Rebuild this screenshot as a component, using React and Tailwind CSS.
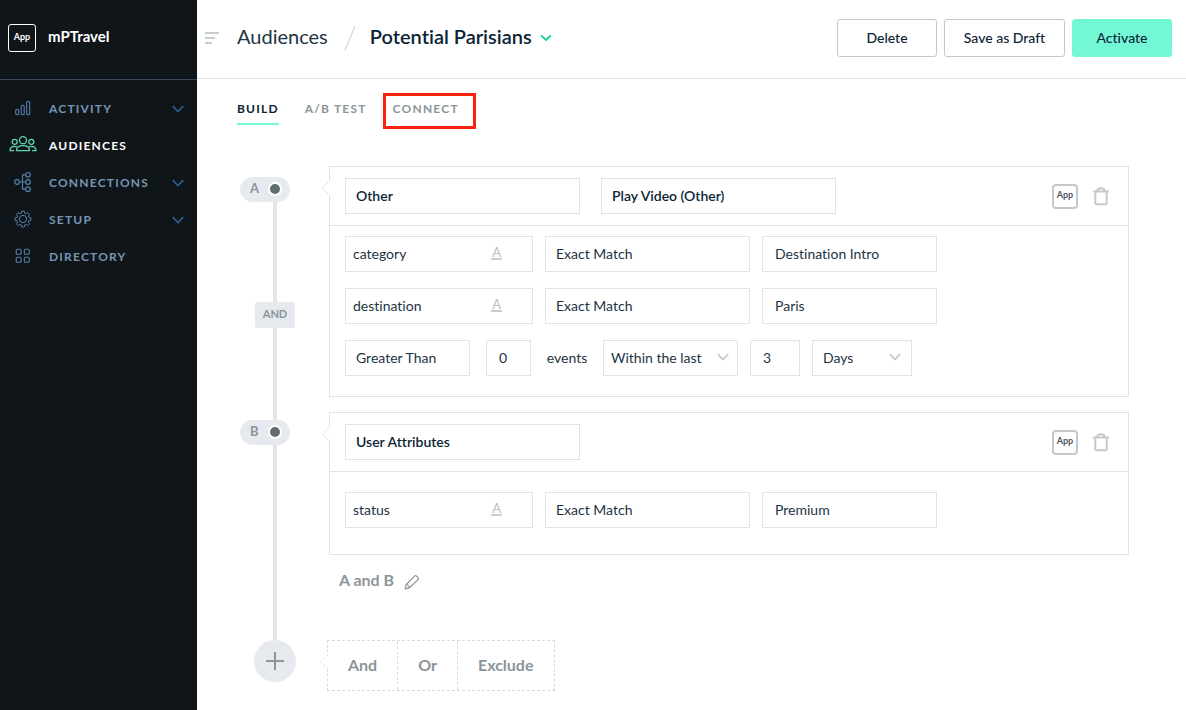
import React from "react";

function ActivityIcon() {
  return (
    <svg width="16" height="16" viewBox="0 0 16 16" fill="none" stroke="#5580ad" strokeWidth="1.1">
      <rect x="0.7" y="9.3" width="3" height="5.4" rx="1.3" />
      <rect x="6.2" y="5.2" width="3" height="9.5" rx="1.3" />
      <rect x="11.7" y="1.2" width="3" height="13.5" rx="1.3" />
    </svg>
  );
}

function AudiencesIcon() {
  return (
    <svg width="28" height="18" viewBox="0 0 28 18" fill="none" stroke="#5ed6b3" strokeWidth="1.3">
      <circle cx="14" cy="4.200" r="3.500" />
      <circle cx="5.700" cy="5.800" r="2.500" />
      <circle cx="22.300" cy="5.800" r="2.500" />
      <path d="M7.500 14.600C7.500 11.500 10.200 9.600 14 9.600s6.500 1.900 6.500 5z" strokeLinejoin="round" />
      <path d="M5 14.600H1.100C1.100 12 2.900 10.300 5.600 10.300c.9 0 1.600.2 2.300.5M23 14.600h3.900c0-2.600-1.800-4.300-4.500-4.300-.9 0-1.600.2-2.300.5" />
    </svg>
  );
}

function ConnectionsIcon() {
  return (
    <svg width="18" height="22" viewBox="0 0 18 22" fill="none" stroke="#5580ad" strokeWidth="1.2">
      <circle cx="3" cy="11" r="2.300" />
      <circle cx="14" cy="3.800" r="2.300" />
      <circle cx="14" cy="11" r="2.300" />
      <circle cx="14" cy="18.200" r="2.300" />
      <path d="M5.300 11h6.400M11.700 3.800H8.500v14.400h3.200" />
    </svg>
  );
}

function SetupIcon() {
  return (
    <svg width="18" height="18" viewBox="0 0 18 18" fill="none" stroke="#5580ad" strokeWidth="1" strokeLinejoin="round">
      <circle cx="9" cy="9" r="3.700" />
      <path d="M7.700 1.200h2.600l.4 2 1.300.5 1.700-1.100 1.800 1.800-1.100 1.700.5 1.300 2 .4v2.600l-2 .4-.5 1.300 1.100 1.700-1.800 1.800-1.700-1.100-1.300.5-.4 2H7.700l-.4-2-1.300-.5-1.700 1.100-1.800-1.800 1.100-1.700-.5-1.300-2-.4V7.800l2-.4.5-1.300-1.100-1.700 1.800-1.800L6 3.700l1.300-.5z" />
    </svg>
  );
}

function DirectoryIcon() {
  return (
    <svg width="16" height="16" viewBox="0 0 16 16" fill="none" stroke="#5580ad" strokeWidth="1.1">
      <rect x="1.200" y="1.200" width="5" height="5" rx="1.300" />
      <rect x="9.300" y="1.200" width="5" height="5" rx="1.300" />
      <rect x="1.200" y="9.300" width="5" height="5" rx="1.300" />
      <rect x="9.300" y="9.300" width="5" height="5" rx="1.300" />
    </svg>
  );
}

function Chevron({ className }) {
  return (
    <svg className={className} width="12" height="8" viewBox="0 0 12 8" fill="none" stroke="currentColor" strokeWidth="1.7">
      <path d="M0.800 1.200 6 6.500l5.200-5.300" />
    </svg>
  );
}

function TrashIcon() {
  return (
    <svg width="16" height="20" viewBox="0 0 16 20" fill="none" stroke="#c4c8cb" strokeWidth="2">
      <path d="M0 5.500h16M4.300 5C4.300 3 5.300 2.300 8 2.300S11.700 3 11.700 5" />
      <path d="M2.300 6.500v10.200c0 1 .5 1.500 1.500 1.500h8.400c1 0 1.500-.5 1.500-1.500V6.500" />
    </svg>
  );
}

function PencilIcon() {
  return (
    <svg width="16" height="16" viewBox="0 0 16 16" fill="none" stroke="#8c9599" strokeWidth="1.200" strokeLinejoin="round">
      <path d="M1.200 14.800l1-4.300L10.800 1.900c.5-.5 1-.5 1.500 0l1.900 1.900c.5.5.5 1 0 1.500L5.500 13.800z" />
      <path d="M2.200 10.500c1.700.2 3 1.500 3.300 3.300" />
    </svg>
  );
}

const navItems = [
  { label: "ACTIVITY", Icon: ActivityIcon, expandable: true },
  { label: "AUDIENCES", Icon: AudiencesIcon, active: true },
  { label: "CONNECTIONS", Icon: ConnectionsIcon, expandable: true },
  { label: "SETUP", Icon: SetupIcon, expandable: true },
  { label: "DIRECTORY", Icon: DirectoryIcon },
];

function Sidebar() {
  return (
    <aside className="flex w-[197px] shrink-0 flex-col bg-[#101519]">
      <div className="flex h-20 items-center gap-3 border-b border-[#3a4a5b] px-2 pb-1">
        <span className="flex size-7 items-center justify-center rounded-[3px] border border-white pb-[2px] text-[9px] font-bold text-white">
          App
        </span>
        <span className="pb-[2px] text-[15px] font-bold text-white">mPTravel</span>
      </div>
      <nav className="flex flex-col pt-[10px]">
        {navItems.map(({ label, Icon, active, expandable }) => (
          <a
            key={label}
            href="#"
            className={
              "flex h-[37px] items-center pr-[13px] text-[12px] font-bold tracking-widest " +
              (active ? "text-white" : "text-[#7596b5]")
            }
          >
            <span className="flex w-[45px] justify-center pb-[2px]">
              <Icon />
            </span>
            <span className="flex-1 pl-1">{label}</span>
            {expandable && <Chevron className="text-[#315d8c]" />}
          </a>
        ))}
      </nav>
    </aside>
  );
}

const headerButton = "h-[38px] rounded-[3px] border pb-[2px] text-[14px] font-medium";

function Header() {
  return (
    <header className="flex h-[79px] items-center border-b border-[#e0e2e4] pr-[14px] pb-[2px] pl-2">
      <button aria-label="Toggle menu" className="flex w-8 flex-col gap-[3px]">
        <span className="h-[2px] w-[14px] bg-[#c9cdd0]" />
        <span className="h-[2px] w-[10px] bg-[#c9cdd0]" />
        <span className="h-[2px] w-[7px] bg-[#c9cdd0]" />
      </button>
      <a href="#" className="pb-1 text-xl text-[#1d3444]">Audiences</a>
      <svg className="mr-[14px] ml-4" width="12" height="26" viewBox="0 0 12 26" stroke="#c9cdd0" strokeWidth="1">
        <path d="M11 1 1 25.500" />
      </svg>
      <button className="flex items-center gap-2 text-xl font-semibold text-[#0b2435]">
        <span className="pb-1">Potential Parisians</span>
        <svg width="12" height="8" viewBox="0 0 12 8" fill="none" stroke="#1fd1a1" strokeWidth="2">
          <path d="M1.200 1.500 6 6l4.800-4.500" />
        </svg>
      </button>
      <div className="ml-auto flex gap-[7px]">
        <button className={headerButton + " w-[100px] border-[#c5c9cc]"}>Delete</button>
        <button className={headerButton + " w-[121px] border-[#c5c9cc]"}>Save as Draft</button>
        <button className={headerButton + " w-[100px] border-[#74f7d5] bg-[#74f7d5]"}>Activate</button>
      </div>
    </header>
  );
}

function Tabs() {
  const tab = "border-b-2 pb-1 text-[12px] leading-5 font-bold tracking-widest";
  return (
    <nav className="flex gap-[26px] pt-5 pl-10">
      <a href="#" className={tab + " border-[#74f7d5] text-[#0b2435]"}>BUILD</a>
      <a href="#" className={tab + " border-transparent text-[#8c9599]"}>A/B TEST</a>
      <a href="#" className={tab + " relative border-transparent text-[#8c9599]"}>
        CONNECT
        <span className="absolute -top-[6px] -right-[17px] -bottom-[6px] -left-[10px] border-3 border-[#fb230c]" />
      </a>
    </nav>
  );
}

const box = "h-9 border border-[#e0e2e4] bg-white pb-[2px]";

function Picker({ label, value, className }) {
  return (
    <select aria-label={label} defaultValue={value} className={box + " appearance-none px-[10px] " + className}>
      <option>{value}</option>
    </select>
  );
}

function ArrowPicker({ label, value, className }) {
  return (
    <div className={box + " flex items-center " + className}>
      <select aria-label={label} defaultValue={value} className="min-w-0 flex-1 appearance-none bg-transparent">
        <option>{value}</option>
      </select>
      <Chevron className="text-[#c4c8cb]" />
    </div>
  );
}

function AttributeRow({ name, value }) {
  return (
    <div className="flex gap-3">
      <label className={box + " flex w-[188px] items-center border-[#d9dcde] pr-[30px] pl-[7px]"}>
        <input aria-label="Attribute" defaultValue={name} className="min-w-0 flex-1" />
        <span className="border-b-2 border-[#c9cdd0] px-px text-[13px] leading-[12px] text-[#b9bec1]">A</span>
      </label>
      <Picker label="Match type" value="Exact Match" className="w-[205px]" />
      <input aria-label="Value" defaultValue={value} className={box + " w-[175px] px-3"} />
    </div>
  );
}

function Notch({ dashed }) {
  return (
    <svg className="absolute top-[13px] -left-[9px]" width="9" height="16" viewBox="0 0 9 16">
      <path d="M9 0 1 8l8 8z" fill="#fff" />
      <path d="M9 0.500 1.200 8 9 15.500" fill="none" stroke="#e0e2e4" strokeDasharray={dashed ? "3 2" : undefined} />
    </svg>
  );
}

function Card({ children, event, source, bodyClass }) {
  return (
    <section className="relative border border-[#e0e2e4]">
      <Notch />
      <div className="flex items-center gap-[21px] border-b border-[#e0e2e4] py-[11px] pr-[19px] pl-[15px]">
        <Picker label="Criteria" value={source} className="w-[235px] font-semibold" />
        {event && <Picker label="Event" value={event} className="w-[235px] font-semibold" />}
        <div className="ml-auto flex items-center gap-[15px]">
          <button className="flex h-[25px] w-[26px] items-center justify-center rounded-[4px] border-2 border-[#c4c8cb] pb-[2px] text-[9px] font-bold text-[#4b5360]">
            App
          </button>
          <button aria-label="Delete criteria"><TrashIcon /></button>
        </div>
      </div>
      <div className={"flex flex-col gap-4 pl-[15px] text-[#1d3444] " + bodyClass}>{children}</div>
    </section>
  );
}

function Pill({ letter }) {
  return (
    <div className="flex h-[25px] w-[50px] shrink-0 items-center justify-between self-start rounded-full bg-[#e6eaef] pr-2 pb-px pl-[10px] text-[13px] font-bold text-[#8c9599]">
      {letter}
      <span className="size-[14px] rounded-full border-2 border-white bg-[#5f6c72]" />
    </div>
  );
}

function Rail({ children }) {
  return <div className="flex w-[70px] shrink-0 flex-col items-center">{children}</div>;
}

const line = "w-1 bg-[#e2e4e6] ";

function Builder() {
  return (
    <div className="flex flex-col pt-[41px] pr-[57px] pl-[43px]">
      <div className="flex gap-[19px]">
        <Rail>
          <div className="h-[11px]" />
          <Pill letter="A" />
          <div className={line + "h-[100px]"} />
          <div className="flex h-[26px] w-10 items-center justify-center rounded-xs bg-[#e6eaef] pb-[2px] text-[11px] font-bold text-[#8c9599]">
            AND
          </div>
          <div className={line + "flex-1"} />
        </Rail>
        <div className="flex-1 pb-[15px]">
          <Card source="Other" event="Play Video (Other)" bodyClass="pt-[10px] pb-5">
            <AttributeRow name="category" value="Destination Intro" />
            <AttributeRow name="destination" value="Paris" />
            <div className="flex items-center">
              <Picker label="Comparison" value="Greater Than" className="w-[125px]" />
              <input aria-label="Event count" defaultValue="0" className={box + " ml-4 w-[45px] px-3"} />
              <span className="w-[72px] pb-[2px] text-center">events</span>
              <ArrowPicker label="Range" value="Within the last" className="w-[135px] pr-2 pl-[7px]" />
              <input aria-label="Range length" defaultValue="3" className={box + " ml-3 w-[50px] px-3"} />
              <ArrowPicker label="Range unit" value="Days" className="ml-3 w-[100px] pr-[10px] pl-[10px]" />
            </div>
          </Card>
        </div>
      </div>
      <div className="flex gap-[19px]">
        <Rail>
          <div className={line + "h-2"} />
          <Pill letter="B" />
          <div className={line + "flex-1"} />
        </Rail>
        <div className="flex-1">
          <Card source="User Attributes" bodyClass="pt-5 pb-[26px]">
            <AttributeRow name="status" value="Premium" />
          </Card>
          <div className="flex h-[85px] items-start gap-[10px] pt-[15px] pl-[10px] text-[16px] leading-5 font-bold text-[#8c9599]">
            A and B
            <button aria-label="Edit logic" className="pt-1"><PencilIcon /></button>
          </div>
        </div>
      </div>
      <div className="flex gap-[17px]">
        <Rail>
          <button aria-label="Add criteria" className="flex size-[42px] items-center justify-center rounded-full bg-[#e6eaef]">
            <svg width="18" height="18" viewBox="0 0 18 18" stroke="#8c9599" strokeWidth="2">
              <path d="M0 9h18M9 0v18" />
            </svg>
          </button>
        </Rail>
        <div className="relative flex h-[51px] border border-dashed border-[#d9dcde] text-[16px] font-bold text-[#8c9599]">
          <Notch dashed />
          <button className="border-r border-dashed border-[#d9dcde] px-5 pb-[2px]">And</button>
          <button className="border-r border-dashed border-[#d9dcde] px-5 pb-[2px]">Or</button>
          <button className="px-5 pb-[2px]">Exclude</button>
        </div>
      </div>
    </div>
  );
}

export default function App() {
  return (
    <div className="flex min-h-screen bg-white font-['Lato',sans-serif] text-[14px] text-[#0b2435] [font-variant-ligatures:none]">
      <Sidebar />
      <main className="min-w-0 flex-1">
        <Header />
        <Tabs />
        <Builder />
      </main>
    </div>
  );
}
